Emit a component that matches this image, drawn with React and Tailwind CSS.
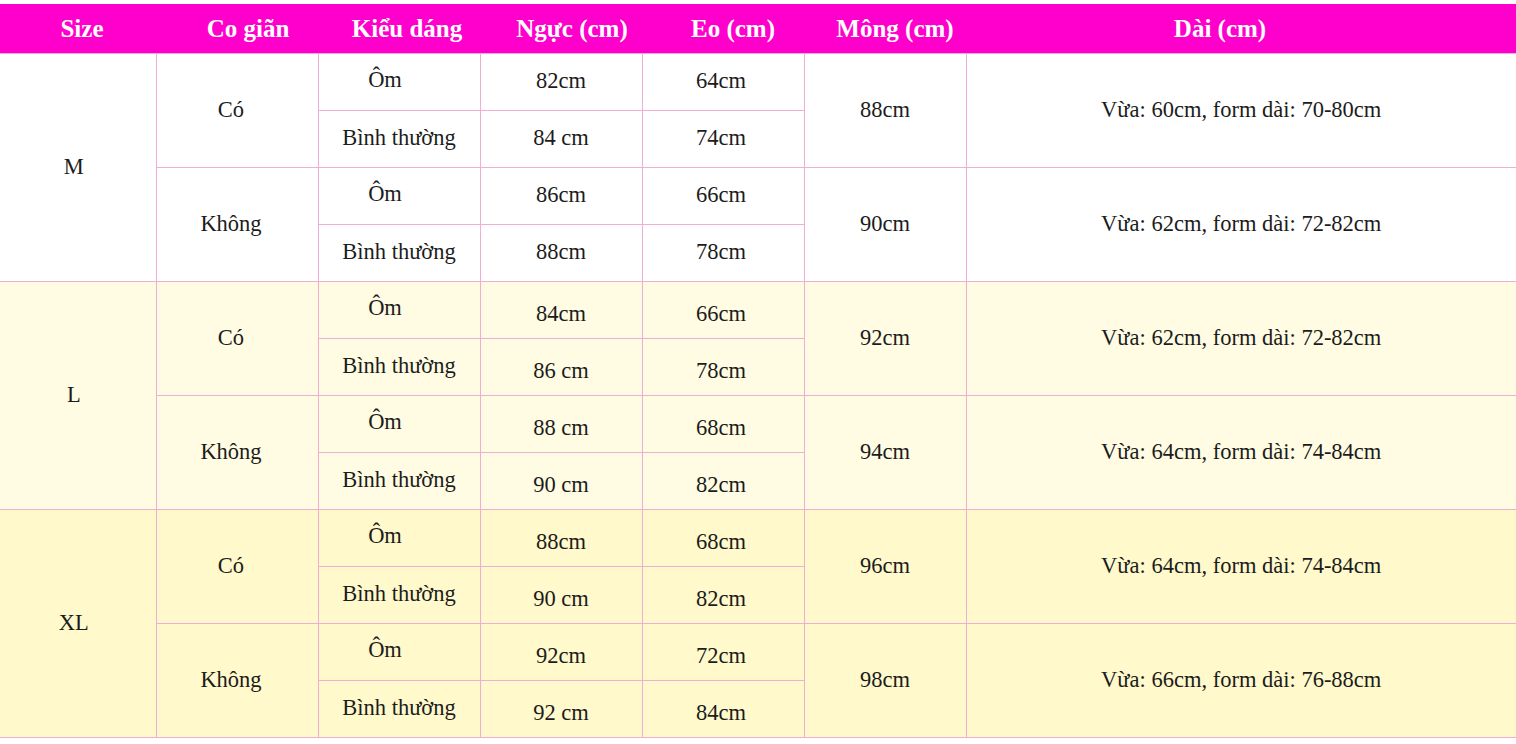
const GROUPS = [
  {
    size: 'M',
    bg: 'bg-white',
    shift: false,
    subs: [
      { stretch: 'Có', hip: '88cm', len: 'Vừa: 60cm, form dài: 70-80cm', rows: [['Ôm', '82cm', '64cm'], ['Bình thường', '84 cm', '74cm']] },
      { stretch: 'Không', hip: '90cm', len: 'Vừa: 62cm, form dài: 72-82cm', rows: [['Ôm', '86cm', '66cm'], ['Bình thường', '88cm', '78cm']] },
    ],
  },
  {
    size: 'L',
    bg: 'bg-[#fffce3]',
    shift: true,
    subs: [
      { stretch: 'Có', hip: '92cm', len: 'Vừa: 62cm, form dài: 72-82cm', rows: [['Ôm', '84cm', '66cm'], ['Bình thường', '86 cm', '78cm']] },
      { stretch: 'Không', hip: '94cm', len: 'Vừa: 64cm, form dài: 74-84cm', rows: [['Ôm', '88 cm', '68cm'], ['Bình thường', '90 cm', '82cm']] },
    ],
  },
  {
    size: 'XL',
    bg: 'bg-[#fff9cb]',
    shift: true,
    subs: [
      { stretch: 'Có', hip: '96cm', len: 'Vừa: 64cm, form dài: 74-84cm', rows: [['Ôm', '88cm', '68cm'], ['Bình thường', '90 cm', '82cm']] },
      { stretch: 'Không', hip: '98cm', len: 'Vừa: 66cm, form dài: 76-88cm', rows: [['Ôm', '92cm', '72cm'], ['Bình thường', '92 cm', '84cm']] },
    ],
  },
]

const HEAD = [
  { label: 'Size', cls: 'pl-[8px]' },
  { label: 'Co giãn', cls: 'pl-[22px]' },
  { label: 'Kiểu dáng', cls: 'pl-[16px]' },
  { label: 'Ngực (cm)', cls: 'pl-[22px]' },
  { label: 'Eo (cm)', cls: 'pl-[20px]' },
  { label: 'Mông (cm)', cls: 'pl-[20px]' },
  { label: 'Dài (cm)', cls: 'pr-[42px]' },
]

const cell = 'border border-[#f1aed3] text-center align-middle font-normal'

export default function App() {
  return (
    <div className="w-[1516px] h-[744px] bg-white pt-[4px] text-[#1c1c1c] overflow-hidden font-['Liberation_Serif','Times_New_Roman',serif]">
      <table className="w-[1516px] table-fixed border-collapse text-[22.5px] leading-none">
        <colgroup>
          <col className="w-[156px]" />
          <col className="w-[162px]" />
          <col className="w-[162px]" />
          <col className="w-[162px]" />
          <col className="w-[162px]" />
          <col className="w-[162px]" />
          <col />
        </colgroup>
        <thead>
          <tr className="h-[49px] bg-[#ff00cc]">
            {HEAD.map(h => (
              <th key={h.label} className={`text-center align-middle text-white font-bold text-[25px] ${h.cls}`}>
                {h.label}
              </th>
            ))}
          </tr>
        </thead>
        <tbody>
          {GROUPS.map(g =>
            g.subs.map((s, si) =>
              s.rows.map((r, ri) => (
                <tr key={g.size + si + ri} className={`h-[57px] ${g.bg}`}>
                  {si === 0 && ri === 0 && (
                    <td rowSpan={4} className={`${cell} border-l-0 pr-[8px]`}>{g.size}</td>
                  )}
                  {ri === 0 && (
                    <td rowSpan={2} className={`${cell} pr-[12px]`}>{s.stretch}</td>
                  )}
                  <td className={`${cell} ${r[0] === 'Ôm' ? 'pr-[28px] pb-[2px]' : ''}`}>{r[0]}</td>
                  <td className={`${cell} ${g.shift ? 'pt-[10px]' : ''}`}>{r[1]}</td>
                  <td className={`${cell} pr-[4px] ${g.shift ? 'pt-[10px]' : ''}`}>{r[2]}</td>
                  {ri === 0 && (
                    <>
                      <td rowSpan={2} className={cell}>{s.hip}</td>
                      <td rowSpan={2} className={`${cell} border-r-0`}>{s.len}</td>
                    </>
                  )}
                </tr>
              ))
            )
          )}
        </tbody>
      </table>
    </div>
  )
}
